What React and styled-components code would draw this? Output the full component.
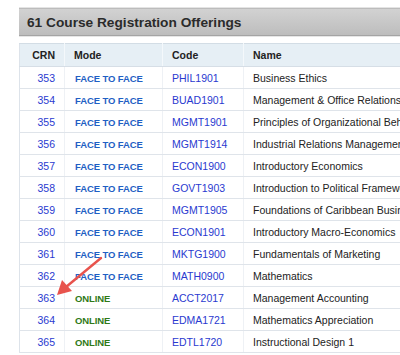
import React from "react";
import styled, { createGlobalStyle } from "styled-components";

const Global = createGlobalStyle`
  html, body { margin: 0; padding: 0; overflow: hidden; background: #fff; }
  body { font-family: "Liberation Sans", Arial, sans-serif; }
`;

const Page = styled.div`
  position: relative;
  width: 400px;
  height: 355px;
  overflow: hidden;
  padding: 8px 0 0 19px;
  box-sizing: border-box;
`;

const TitleBar = styled.div`
  width: 600px;
  height: 28px;
  box-sizing: border-box;
  display: flex;
  align-items: center;
  padding: 1px 0 0 8px;
  background: linear-gradient(#d2d2d2, #bdbdbd);
  border-top: 1px solid #bcbcbc;
  border-bottom: 1px solid #a4a4a4;
  box-shadow: 0 -1px 0 #e4e4e4, 0 1px 0 #e6e6e6;
  font-weight: bold;
  font-size: 13.7px;
  color: #2b2b2b;
`;

const Table = styled.table`
  margin-top: 7px;
  width: 640px;
  border-collapse: collapse;
  table-layout: fixed;
  font-size: 10.5px;
  border-left: 1px solid #dde3ea;
  border-top: 1px solid #d3dde5;
`;

const Col = styled.col`
  width: ${(p) => p.$w}px;
`;

const Th = styled.th`
  height: 23px;
  padding: 0 ${(p) => (p.$right ? "9px" : "0")} 0 ${(p) => (p.$right ? "0" : "9px")};
  text-align: ${(p) => (p.$right ? "right" : "left")};
  background: #e6eff5;
  border-bottom: 1px solid #d6dee6;
  border-right: 1px solid #f4f8fb;
  font-weight: bold;
  color: #222;
  box-sizing: border-box;
`;

const Td = styled.td`
  height: 22px;
  padding: 0 ${(p) => (p.$right ? "9px" : "0")} 0 ${(p) => (p.$right ? "0" : "9px")};
  text-align: ${(p) => (p.$right ? "right" : "left")};
  border-bottom: 1px solid #dfe4ea;
  border-right: 1px solid #eef1f5;
  color: #222;
  white-space: nowrap;
  overflow: hidden;
  box-sizing: border-box;
`;

const Link = styled.span`
  color: #2a3ad0;
`;

const Mode = styled.span`
  font-weight: bold;
  font-size: 9.5px;
  letter-spacing: -0.1px;
  color: ${(p) => (p.$online ? "#2f7a17" : "#1f5fc4")};
  padding-left: 1px;
`;

const Arrow = styled.svg`
  position: absolute;
  left: 0;
  top: 0;
  pointer-events: none;
`;

const rows = [
  ["353", "FACE TO FACE", "PHIL1901", "Business Ethics"],
  ["354", "FACE TO FACE", "BUAD1901", "Management & Office Relations"],
  ["355", "FACE TO FACE", "MGMT1901", "Principles of Organizational Behaviour"],
  ["356", "FACE TO FACE", "MGMT1914", "Industrial Relations Management"],
  ["357", "FACE TO FACE", "ECON1900", "Introductory Economics"],
  ["358", "FACE TO FACE", "GOVT1903", "Introduction to Political Frameworks"],
  ["359", "FACE TO FACE", "MGMT1905", "Foundations of Caribbean Business"],
  ["360", "FACE TO FACE", "ECON1901", "Introductory Macro-Economics"],
  ["361", "FACE TO FACE", "MKTG1900", "Fundamentals of Marketing"],
  ["362", "FACE TO FACE", "MATH0900", "Mathematics"],
  ["363", "ONLINE", "ACCT2017", "Management Accounting"],
  ["364", "ONLINE", "EDMA1721", "Mathematics Appreciation"],
  ["365", "ONLINE", "EDTL1720", "Instructional Design 1"],
];

export default function App() {
  return (
    <>
      <Global />
      <Page>
        <TitleBar>61 Course Registration Offerings</TitleBar>
        <Table>
          <colgroup>
            <Col $w={45} />
            <Col $w={98} />
            <Col $w={81} />
            <Col $w={416} />
          </colgroup>
          <thead>
            <tr>
              <Th $right>CRN</Th>
              <Th>Mode</Th>
              <Th>Code</Th>
              <Th>Name</Th>
            </tr>
          </thead>
          <tbody>
            {rows.map(([crn, mode, code, name]) => (
              <tr key={crn}>
                <Td $right>
                  <Link>{crn}</Link>
                </Td>
                <Td>
                  <Mode $online={mode === "ONLINE"}>{mode}</Mode>
                </Td>
                <Td>
                  <Link>{code}</Link>
                </Td>
                <Td>{name}</Td>
              </tr>
            ))}
          </tbody>
        </Table>
        <Arrow width="400" height="355" viewBox="0 0 400 355">
          <line x1="101" y1="258" x2="66" y2="287" stroke="#e8534d" strokeWidth="2.4" strokeLinecap="round" />
          <polygon points="57,295 62,280 72,291" fill="#e8534d" />
        </Arrow>
      </Page>
    </>
  );
}
